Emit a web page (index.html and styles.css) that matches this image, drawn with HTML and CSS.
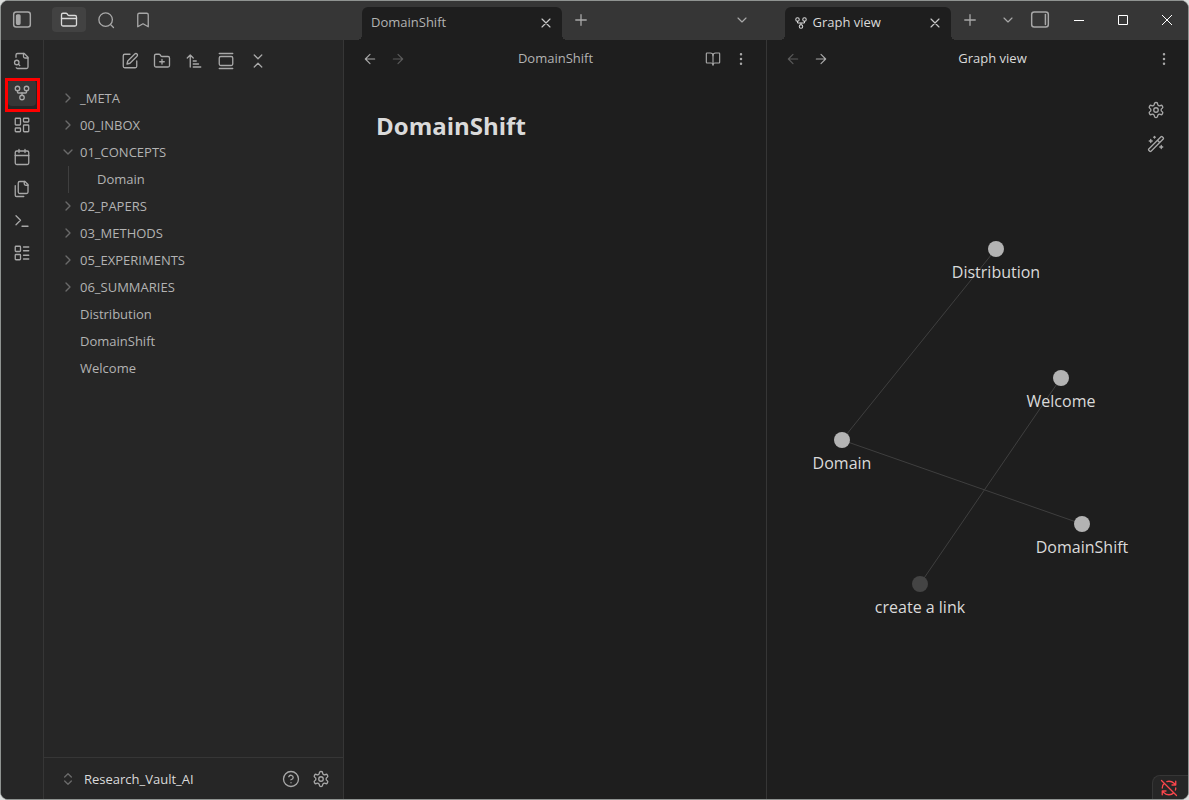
FILE: index.html
```html
<!DOCTYPE html>
<html lang="en">
<head>
  <meta charset="UTF-8">
  <meta name="viewport" content="width=device-width, initial-scale=1.0">
  <title>DomainShift - Research_Vault_AI</title>
  <link rel="stylesheet" href="styles.css">
</head>
<body>
  <!-- Icon set -->
  <svg class="icon-set" aria-hidden="true">
    <symbol id="panel-left" viewBox="0 0 24 24"><rect x="2" y="2.5" width="20" height="18" rx="3"/><rect x="5.5" y="6" width="4" height="11" rx="1" fill="currentColor"/></symbol>
    <symbol id="panel-right" viewBox="0 0 24 24"><rect x="2" y="2.5" width="20" height="18" rx="3"/><path d="M18.5 5.5v12"/></symbol>
    <symbol id="folder" viewBox="0 0 24 24"><path d="M20 20a2 2 0 0 0 2-2V8a2 2 0 0 0-2-2h-7.9a2 2 0 0 1-1.69-.9L9.6 3.9A2 2 0 0 0 7.93 3H4a2 2 0 0 0-2 2v13a2 2 0 0 0 2 2Z"/><path d="M2 10h20"/></symbol>
    <symbol id="folder-plus" viewBox="0 0 24 24"><path d="M12 10v6M9 13h6"/><path d="M20 20a2 2 0 0 0 2-2V8a2 2 0 0 0-2-2h-7.9a2 2 0 0 1-1.69-.9L9.6 3.9A2 2 0 0 0 7.93 3H4a2 2 0 0 0-2 2v13a2 2 0 0 0 2 2Z"/></symbol>
    <symbol id="search" viewBox="0 0 24 24"><circle cx="11.5" cy="11.5" r="9"/><path d="m22 22-4-4"/></symbol>
    <symbol id="bookmark" viewBox="0 0 24 24"><path d="m19 21-7-4-7 4V5a2 2 0 0 1 2-2h10a2 2 0 0 1 2 2Z"/></symbol>
    <symbol id="file-search" viewBox="0 0 24 24"><path d="M14 2v4a2 2 0 0 0 2 2h4"/><path d="M4.27 21A2 2 0 0 0 6 22h12a2 2 0 0 0 2-2V7l-5-5H6a2 2 0 0 0-2 2v3"/><path d="m9 18-1.5-1.5"/><circle cx="5" cy="14" r="3"/></symbol>
    <symbol id="git-fork" viewBox="0 0 24 24"><circle cx="12" cy="18" r="3"/><circle cx="6" cy="6" r="3"/><circle cx="18" cy="6" r="3"/><path d="M18 9v2a1 1 0 0 1-1 1H7a1 1 0 0 1-1-1V9"/><path d="M12 12v3"/></symbol>
    <symbol id="dashboard" viewBox="0 0 24 24"><rect x="3" y="3" width="7" height="9" rx="1"/><rect x="14" y="3" width="7" height="5" rx="1"/><rect x="14" y="12" width="7" height="9" rx="1"/><rect x="3" y="16" width="7" height="5" rx="1"/></symbol>
    <symbol id="calendar" viewBox="0 0 24 24"><path d="M8 2v4M16 2v4M3 10h18"/><rect x="3" y="4" width="18" height="18" rx="2"/></symbol>
    <symbol id="files" viewBox="0 0 24 24"><path d="M20 7h-3a2 2 0 0 1-2-2V2"/><path d="M9 18a2 2 0 0 1-2-2V4a2 2 0 0 1 2-2h7l4 4v10a2 2 0 0 1-2 2Z"/><path d="M3 7.6v12.8A1.6 1.6 0 0 0 4.6 22h9.8"/></symbol>
    <symbol id="terminal" viewBox="0 0 24 24"><path d="m4 17 6-6-6-6M12 19h8"/></symbol>
    <symbol id="layout-list" viewBox="0 0 24 24"><rect x="3" y="3" width="7" height="7" rx="1"/><rect x="3" y="14" width="7" height="7" rx="1"/><path d="M14 4h7M14 9h7M14 15h7M14 20h7"/></symbol>
    <symbol id="edit" viewBox="0 0 24 24"><path d="M12 3H5a2 2 0 0 0-2 2v14a2 2 0 0 0 2 2h14a2 2 0 0 0 2-2v-7"/><path d="M18.38 2.62a2.12 2.12 0 1 1 3 3L12 15l-4 1 1-4Z"/></symbol>
    <symbol id="sort" viewBox="0 0 24 24"><path d="m3 8 4-4 4 4M7 4v16M11 12h4M11 16h7M11 20h10"/></symbol>
    <symbol id="gallery" viewBox="0 0 24 24"><path d="M3 2h18M3 22h18"/><rect x="3" y="6" width="18" height="12" rx="2"/></symbol>
    <symbol id="collapse" viewBox="0 0 24 24"><path d="m7 20 5-5 5 5M7 4l5 5 5-5"/></symbol>
    <symbol id="expand" viewBox="0 0 24 24"><path d="m7 15 5 5 5-5M7 9l5-5 5 5"/></symbol>
    <symbol id="chevron-right" viewBox="0 0 24 24"><path d="m9 18 6-6-6-6"/></symbol>
    <symbol id="chevron-down" viewBox="0 0 24 24"><path d="m6 9 6 6 6-6"/></symbol>
    <symbol id="close" viewBox="0 0 24 24"><path d="M18 6 6 18M6 6l12 12"/></symbol>
    <symbol id="plus" viewBox="0 0 24 24"><path d="M5 12h14M12 5v14"/></symbol>
    <symbol id="arrow-left" viewBox="0 0 24 24"><path d="m12 19-7-7 7-7M19 12H5"/></symbol>
    <symbol id="arrow-right" viewBox="0 0 24 24"><path d="m12 5 7 7-7 7M5 12h14"/></symbol>
    <symbol id="book" viewBox="0 0 24 24"><path d="M12 7v14"/><path d="M3 18a1 1 0 0 1-1-1V4a1 1 0 0 1 1-1h5a4 4 0 0 1 4 4 4 4 0 0 1 4-4h5a1 1 0 0 1 1 1v13a1 1 0 0 1-1 1h-6a3 3 0 0 0-3 3 3 3 0 0 0-3-3Z"/></symbol>
    <symbol id="more" viewBox="0 0 24 24"><circle cx="12" cy="12" r="1"/><circle cx="12" cy="5" r="1"/><circle cx="12" cy="19" r="1"/></symbol>
    <symbol id="help" viewBox="0 0 24 24"><circle cx="12" cy="12" r="10"/><path d="M9.09 9a3 3 0 0 1 5.83 1c0 2-3 3-3 3M12 17h.01"/></symbol>
    <symbol id="gear" viewBox="0 0 24 24"><path d="M12.22 2h-.44a2 2 0 0 0-2 2v.18a2 2 0 0 1-1 1.73l-.43.25a2 2 0 0 1-2 0l-.15-.08a2 2 0 0 0-2.73.73l-.22.38a2 2 0 0 0 .73 2.73l.15.1a2 2 0 0 1 1 1.72v.51a2 2 0 0 1-1 1.74l-.15.09a2 2 0 0 0-.73 2.73l.22.38a2 2 0 0 0 2.73.73l.15-.08a2 2 0 0 1 2 0l.43.25a2 2 0 0 1 1 1.73V20a2 2 0 0 0 2 2h.44a2 2 0 0 0 2-2v-.18a2 2 0 0 1 1-1.73l.43-.25a2 2 0 0 1 2 0l.15.08a2 2 0 0 0 2.73-.73l.22-.39a2 2 0 0 0-.73-2.73l-.15-.08a2 2 0 0 1-1-1.74v-.5a2 2 0 0 1 1-1.74l.15-.09a2 2 0 0 0 .73-2.73l-.22-.38a2 2 0 0 0-2.73-.73l-.15.08a2 2 0 0 1-2 0l-.43-.25a2 2 0 0 1-1-1.73V4a2 2 0 0 0-2-2z"/><circle cx="12" cy="12" r="3"/></symbol>
    <symbol id="wand" viewBox="0 0 24 24"><path d="m21.64 3.64-1.28-1.28a1.21 1.21 0 0 0-1.72 0L2.36 18.64a1.21 1.21 0 0 0 0 1.72l1.28 1.28a1.2 1.2 0 0 0 1.72 0L21.64 5.36a1.2 1.2 0 0 0 0-1.72M14 7l3 3M5 6v4M19 14v4M10 2v2M7 8H3M21 16h-4M11 3H9"/></symbol>
    <symbol id="sync-off" viewBox="0 0 24 24"><path d="M21 8l-2.26-2.26A9.75 9.75 0 0 0 12 3c-1 0-1.97.16-2.87.47M8 16H3v5M3 12c0-2.49 1-4.74 2.64-6.36M3 16l2.26 2.26A9.75 9.75 0 0 0 12 21c2.49 0 4.74-1 6.36-2.64M21 12c0 1-.16 1.97-.47 2.87M21 3v5h-5M22 22 2 2"/></symbol>
    <symbol id="win-min" viewBox="0 0 12 12"><path d="M1 6.5h10"/></symbol>
    <symbol id="win-max" viewBox="0 0 12 12"><rect x="1.5" y="1.5" width="9" height="9"/></symbol>
    <symbol id="win-close" viewBox="0 0 12 12"><path d="m1 1 10 10M11 1 1 11"/></symbol>
  </svg>

  <div class="window">
    <!-- Title bar -->
    <header class="titlebar">
      <div class="titlebar-left">
        <button class="icon-btn panel-toggle" aria-label="Collapse sidebar"><svg class="icon icon-lg"><use href="#panel-left"/></svg></button>
        <button class="side-tab active" aria-label="Files"><svg class="icon icon-md"><use href="#folder"/></svg></button>
        <button class="side-tab" aria-label="Search"><svg class="icon icon-md"><use href="#search"/></svg></button>
        <button class="side-tab" aria-label="Bookmarks"><svg class="icon icon-md"><use href="#bookmark"/></svg></button>
      </div>

      <div class="tabs">
        <div class="tab tab-wide">
          <span class="tab-title">DomainShift</span>
          <button class="icon-btn tab-close" aria-label="Close"><svg class="icon"><use href="#close"/></svg></button>
        </div>
        <button class="icon-btn new-tab" aria-label="New tab"><svg class="icon icon-md"><use href="#plus"/></svg></button>
        <button class="icon-btn tab-list" aria-label="Tab list"><svg class="icon"><use href="#chevron-down"/></svg></button>
      </div>

      <div class="tabs tabs-right">
        <div class="tab tab-current">
          <svg class="icon icon-sm"><use href="#git-fork"/></svg>
          <span class="tab-title">Graph view</span>
          <button class="icon-btn tab-close" aria-label="Close"><svg class="icon"><use href="#close"/></svg></button>
        </div>
        <button class="icon-btn new-tab" aria-label="New tab"><svg class="icon icon-md"><use href="#plus"/></svg></button>
        <button class="icon-btn tab-list" aria-label="Tab list"><svg class="icon"><use href="#chevron-down"/></svg></button>
        <button class="icon-btn" aria-label="Expand sidebar"><svg class="icon icon-lg"><use href="#panel-right"/></svg></button>
        <div class="window-controls">
          <button aria-label="Minimize"><svg class="win-icon"><use href="#win-min"/></svg></button>
          <button aria-label="Maximize"><svg class="win-icon"><use href="#win-max"/></svg></button>
          <button aria-label="Close window"><svg class="win-icon"><use href="#win-close"/></svg></button>
        </div>
      </div>
    </header>

    <div class="workspace">
      <!-- Ribbon -->
      <nav class="ribbon">
        <button class="ribbon-btn" aria-label="Quick switcher"><svg class="icon icon-md"><use href="#file-search"/></svg></button>
        <button class="ribbon-btn marked" aria-label="Open graph view"><svg class="icon icon-md"><use href="#git-fork"/></svg></button>
        <button class="ribbon-btn" aria-label="New canvas"><svg class="icon icon-md"><use href="#dashboard"/></svg></button>
        <button class="ribbon-btn" aria-label="Daily note"><svg class="icon icon-md"><use href="#calendar"/></svg></button>
        <button class="ribbon-btn" aria-label="Insert template"><svg class="icon icon-md"><use href="#files"/></svg></button>
        <button class="ribbon-btn" aria-label="Command palette"><svg class="icon icon-md"><use href="#terminal"/></svg></button>
        <button class="ribbon-btn" aria-label="New base"><svg class="icon icon-md"><use href="#layout-list"/></svg></button>
      </nav>

      <!-- File explorer -->
      <aside class="sidebar">
        <div class="sidebar-tools">
          <button class="tool-btn" aria-label="New note"><svg class="icon icon-md"><use href="#edit"/></svg></button>
          <button class="tool-btn" aria-label="New folder"><svg class="icon icon-md"><use href="#folder-plus"/></svg></button>
          <button class="tool-btn" aria-label="Sort order"><svg class="icon icon-md"><use href="#sort"/></svg></button>
          <button class="tool-btn" aria-label="Auto reveal"><svg class="icon icon-md"><use href="#gallery"/></svg></button>
          <button class="tool-btn" aria-label="Collapse all"><svg class="icon icon-md"><use href="#collapse"/></svg></button>
        </div>

        <ul class="tree">
          <li><button class="tree-item"><svg class="chevron"><use href="#chevron-right"/></svg>_META</button></li>
          <li><button class="tree-item"><svg class="chevron"><use href="#chevron-right"/></svg>00_INBOX</button></li>
          <li>
            <button class="tree-item"><svg class="chevron"><use href="#chevron-down"/></svg>01_CONCEPTS</button>
            <ul class="tree-children">
              <li><a class="tree-item" href="#">Domain</a></li>
            </ul>
          </li>
          <li><button class="tree-item"><svg class="chevron"><use href="#chevron-right"/></svg>02_PAPERS</button></li>
          <li><button class="tree-item"><svg class="chevron"><use href="#chevron-right"/></svg>03_METHODS</button></li>
          <li><button class="tree-item"><svg class="chevron"><use href="#chevron-right"/></svg>05_EXPERIMENTS</button></li>
          <li><button class="tree-item"><svg class="chevron"><use href="#chevron-right"/></svg>06_SUMMARIES</button></li>
          <li><a class="tree-item file" href="#">Distribution</a></li>
          <li><a class="tree-item file" href="#">DomainShift</a></li>
          <li><a class="tree-item file" href="#">Welcome</a></li>
        </ul>

        <div class="vault">
          <button class="vault-name"><svg class="chevron"><use href="#expand"/></svg>Research_Vault_AI</button>
          <button class="vault-btn" aria-label="Help"><svg class="icon icon-md"><use href="#help"/></svg></button>
          <button class="vault-btn" aria-label="Settings"><svg class="icon icon-md"><use href="#gear"/></svg></button>
        </div>
      </aside>

      <!-- Note -->
      <main class="leaf">
        <div class="view-header">
          <button class="view-btn" aria-label="Back"><svg class="icon"><use href="#arrow-left"/></svg></button>
          <button class="view-btn" aria-label="Forward" disabled><svg class="icon"><use href="#arrow-right"/></svg></button>
          <span class="view-title">DomainShift</span>
          <button class="view-btn" aria-label="Reading view"><svg class="icon"><use href="#book"/></svg></button>
          <button class="view-btn" aria-label="More options"><svg class="icon"><use href="#more"/></svg></button>
        </div>
        <article class="note">
          <h1>DomainShift</h1>
        </article>
      </main>

      <!-- Graph -->
      <section class="leaf leaf-graph">
        <div class="view-header">
          <button class="view-btn" aria-label="Back" disabled><svg class="icon"><use href="#arrow-left"/></svg></button>
          <button class="view-btn" aria-label="Forward"><svg class="icon"><use href="#arrow-right"/></svg></button>
          <span class="view-title current">Graph view</span>
          <button class="view-btn" aria-label="More options"><svg class="icon"><use href="#more"/></svg></button>
        </div>
        <div class="graph">
          <svg class="graph-canvas" viewBox="0 0 421 722">
            <g class="links">
              <path d="M229 172 75 363"/>
              <path d="M75 363 315 447"/>
              <path d="M294 301 153 507"/>
            </g>
            <g class="nodes">
              <circle cx="229" cy="172" r="8"/>
              <circle cx="294" cy="301" r="8"/>
              <circle cx="75" cy="363" r="8"/>
              <circle cx="315" cy="447" r="8"/>
              <circle class="unresolved" cx="153" cy="507" r="8"/>
            </g>
            <g class="labels">
              <text x="229" y="201">Distribution</text>
              <text x="294" y="330">Welcome</text>
              <text x="75" y="392">Domain</text>
              <text x="315" y="476">DomainShift</text>
              <text x="153" y="536">create a link</text>
            </g>
          </svg>
          <div class="graph-controls">
            <button class="icon-btn" aria-label="Graph settings"><svg class="icon icon-md"><use href="#gear"/></svg></button>
            <button class="icon-btn" aria-label="Animate"><svg class="icon icon-md"><use href="#wand"/></svg></button>
          </div>
        </div>
        <button class="sync-status" aria-label="Sync is off"><svg class="icon icon-md"><use href="#sync-off"/></svg></button>
      </section>
    </div>
  </div>
</body>
</html>
```

FILE: styles.css
```css
/* General Styles */
* {
  box-sizing: border-box;
}

body {
  margin: 0;
  background: #dcdedd;
  color: #b3b3b3;
  font-family: 'Open Sans', 'Noto Sans', sans-serif;
  font-size: 13px;
  line-height: 20px;
}

button {
  display: flex;
  align-items: center;
  justify-content: center;
  flex-shrink: 0;
  padding: 0;
  border: none;
  background: none;
  color: inherit;
  font: inherit;
  cursor: pointer;
}

a {
  color: inherit;
  text-decoration: none;
}

ul {
  margin: 0;
  padding: 0;
  list-style: none;
}

.window {
  display: flex;
  flex-direction: column;
  height: 100vh;
  border: 1px solid #8f9391;
  border-radius: 8px;
  background: #1e1e1e;
  overflow: hidden;
}

/* Icons */
.icon-set {
  position: absolute;
  width: 0;
  height: 0;
}

.icon,
.chevron,
.win-icon {
  display: block;
  flex-shrink: 0;
  fill: none;
  stroke: currentColor;
  stroke-width: 1.75;
  stroke-linecap: round;
  stroke-linejoin: round;
}

.icon {
  width: 16px;
  height: 16px;
}

.icon-sm {
  width: 14px;
  height: 14px;
}

.icon-md {
  width: 18px;
  height: 18px;
}

.icon-lg {
  width: 20px;
  height: 20px;
}

.icon-btn {
  width: 24px;
  height: 24px;
}

.icon-btn,
.side-tab,
.ribbon-btn,
.tool-btn,
.vault-btn,
.view-btn {
  color: #a8a8a8;
}

/* Title Bar */
.titlebar {
  display: flex;
  flex-shrink: 0;
  height: 39px;
  background: #363636;
}

.titlebar-left {
  display: flex;
  align-items: center;
  gap: 3px;
  width: 343px;
  padding: 0 0 2px 9px;
  flex-shrink: 0;
}

.panel-toggle {
  margin-right: 15px;
}

.side-tab {
  width: 34px;
  height: 25px;
  border-radius: 4px;
}

.side-tab.active {
  background: #424242;
  color: #dadada;
}

.tabs {
  display: flex;
  flex: 1;
  align-items: center;
  min-width: 0;
  padding-left: 18px;
}

.tabs-right {
  border-left: 1px solid #363636;
}

.tab {
  position: relative;
  display: flex;
  align-items: center;
  align-self: flex-end;
  width: 166px;
  height: 33px;
  padding: 0 4px 2px 9px;
  border-radius: 6px 6px 0 0;
  background: #1e1e1e;
}

.tab-wide {
  width: 200px;
}

/* Flared bottom corners */
.tab::before,
.tab::after {
  content: '';
  position: absolute;
  bottom: 0;
  width: 5px;
  height: 5px;
}

.tab::before {
  right: 100%;
  background: radial-gradient(circle at 0 0, #363636 5px, #1e1e1e 5px);
}

.tab::after {
  left: 100%;
  background: radial-gradient(circle at 100% 0, #363636 5px, #1e1e1e 5px);
}

.tab-title,
.view-title {
  flex: 1;
  padding-bottom: 2px;
}

.tab-current {
  color: #dadada;
}

.tab-close {
  color: #c8c8c8;
}

.tab .icon-sm {
  margin-right: 5px;
}

.new-tab {
  margin-left: 7px;
}

.tab-list {
  margin: 0 12px 0 auto;
}

.tabs-right .tab-list {
  margin-right: 8px;
}

.window-controls {
  display: flex;
  margin-left: 5px;
  color: #fff;
}

.window-controls button {
  width: 44px;
  height: 36px;
}

.window-controls button:last-child {
  width: 43px;
}

.win-icon {
  width: 12px;
  height: 12px;
  stroke-width: 1;
  stroke-linecap: butt;
}

.tabs > button,
.window-controls {
  margin-bottom: 1px;
}

/* Ribbon */
.workspace {
  display: grid;
  grid-template-columns: 43px 300px 1fr 1fr;
  flex: 1;
  min-height: 0;
}

.ribbon {
  display: flex;
  flex-direction: column;
  align-items: center;
  gap: 6px;
  padding-top: 8px;
  border-right: 1px solid #363636;
  background: #262626;
}

.ribbon-btn {
  position: relative;
  width: 28px;
  height: 26px;
  border-radius: 4px;
}

.ribbon-btn.marked {
  background: #363636;
}

.ribbon-btn.marked::after {
  content: '';
  position: absolute;
  inset: -2px -4px -6px -3px;
  border: 3px solid #f00;
}

/* File Explorer */
.sidebar {
  display: flex;
  flex-direction: column;
  border-right: 1px solid #363636;
  background: #262626;
}

.sidebar-tools {
  display: flex;
  justify-content: center;
  padding: 8px 0 11px;
}

.tool-btn {
  width: 32px;
  height: 26px;
}

.tree {
  flex: 1;
}

.tree-item {
  display: flex;
  align-items: center;
  justify-content: flex-start;
  width: 100%;
  height: 27px;
  padding: 0 0 1px 16px;
}

.tree-item.file {
  padding-left: 36px;
}

.chevron {
  width: 16px;
  height: 16px;
  margin-right: 4px;
  color: #6a6a6a;
  stroke-width: 2;
}

.tree-children {
  margin-left: 24px;
  border-left: 1px solid #3f3f3f;
}

.tree-children .tree-item {
  padding-left: 28px;
}

.vault {
  display: flex;
  align-items: center;
  height: 42px;
  padding: 0 7px 0 16px;
  border-top: 1px solid #363636;
}

.vault-name {
  flex: 1;
  justify-content: flex-start;
  color: #dadada;
}

.vault-name .chevron {
  margin-right: 8px;
}

.vault-btn {
  width: 30px;
  height: 30px;
}

/* Views */
.leaf {
  position: relative;
  display: flex;
  flex-direction: column;
  min-width: 0;
}

.leaf-graph {
  border-left: 1px solid #363636;
}

.view-header {
  display: flex;
  align-items: center;
  height: 37px;
  padding: 0 11px 0 12px;
}

.leaf-graph .view-header {
  padding-right: 10px;
}

.view-btn {
  width: 28px;
  height: 26px;
}

.view-btn:disabled {
  color: #5a5a5a;
  cursor: default;
}

.view-title {
  text-align: center;
}

.view-title.current {
  color: #dadada;
}

.note {
  padding: 32px;
}

.note h1 {
  margin: 0;
  color: #dadada;
  font-size: 24px;
  font-weight: 700;
  line-height: 34px;
}

/* Graph */
.graph {
  position: relative;
  flex: 1;
  min-height: 0;
}

.graph-canvas {
  display: block;
  width: 100%;
  height: 100%;
}

.links path {
  stroke: #3f3f3f;
  stroke-width: 1;
}

.nodes circle {
  fill: #b3b3b3;
}

.nodes .unresolved {
  fill: #444;
}

.labels text {
  fill: #dadada;
  font-size: 16px;
  text-anchor: middle;
}

.graph-controls {
  position: absolute;
  top: 21px;
  right: 20px;
  display: flex;
  flex-direction: column;
  gap: 10px;
}

.sync-status {
  position: absolute;
  right: 0;
  bottom: 0;
  width: 36px;
  height: 24px;
  padding-right: 4px;
  border: 1px solid #363636;
  border-width: 1px 0 0 1px;
  border-radius: 8px 0 0 0;
  background: #262626;
  color: #fb464c;
}
```
